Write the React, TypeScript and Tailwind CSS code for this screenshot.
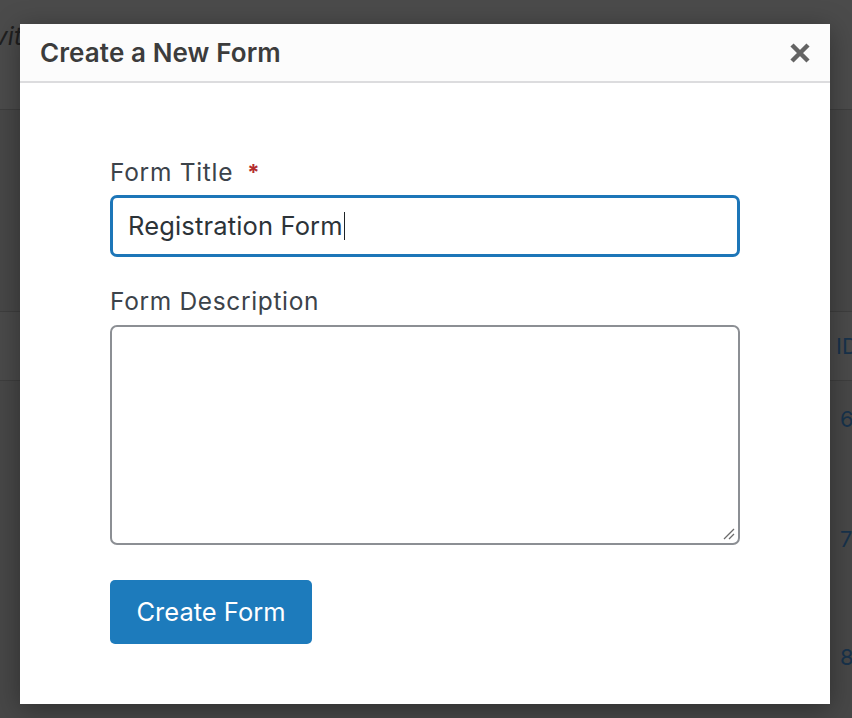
import React from 'react';

const font = { fontFamily: 'Inter, "Noto Sans", "Liberation Sans", sans-serif' };

const App: React.FC = () => {
    return (
        <div className="relative w-full h-[718px] overflow-hidden bg-[#474747]" style={font}>
            {/* page behind the overlay */}
            <div className="flex flex-col">
                <div className="h-[110px] bg-[#4b4b4b] border-b border-[#3e3e3e] overflow-hidden">
                    <div className="ml-[-52px] mt-[18px] text-[25px] italic text-[#1f1f1f] whitespace-nowrap">Activity</div>
                </div>
                <div className="h-[201px]" />
                <div className="h-[70px] bg-[#4a4a4a] border-y border-[#3e3e3e] flex items-center justify-end">
                    <span className="w-[16px] text-[22px] text-[#17324b] whitespace-nowrap overflow-hidden">ID</span>
                </div>
                <div className="flex flex-col items-end text-[22px] text-[#17324b]">
                    <div className="h-[120px] w-[12px] pt-[22px] overflow-hidden">6</div>
                    <div className="h-[118px] w-[12px] pt-[22px] overflow-hidden">7</div>
                    <div className="h-[120px] w-[12px] pt-[22px] overflow-hidden">8</div>
                </div>
            </div>

            {/* modal */}
            <div className="absolute left-[20px] top-[24px] w-[810px] h-[680px] bg-white shadow-[0_5px_25px_rgba(0,0,0,0.35)] flex flex-col">
                <div className="h-[59px] shrink-0 bg-[#fcfcfc] border-b-2 border-[#dcdcde] flex items-center justify-between pl-[20px] pr-[18px]">
                    <h1 className="text-[26px] font-semibold text-[#3c3c3c] tracking-[0.1px]">Create a New Form</h1>
                    <button className="w-[24px] h-[24px] flex items-center justify-center text-[#646464]">
                        <svg width="22" height="22" viewBox="0 0 22 22">
                            <path d="M3 3 L19 19 M19 3 L3 19" stroke="currentColor" strokeWidth="4.5" strokeLinecap="butt" />
                        </svg>
                    </button>
                </div>
                <div className="flex flex-col pl-[90px] pr-[90px] pt-[75px]">
                    <label className="flex items-center gap-[14px] text-[24.5px] tracking-[0.7px] text-[#3c434a] leading-[28px]">
                        Form Title <span className="text-[#b32d2e] text-[22px] font-bold">*</span>
                    </label>
                    <div className="mt-[9px] h-[62px] rounded-[7px] border-[3px] border-[#1d76b8] flex items-center pl-[15px] text-[25.5px] tracking-[0.15px] text-[#2c3338]">
                        Registration Form<span className="w-[1.5px] h-[28px] bg-[#1d2327] ml-[1px]" />
                    </div>
                    <label className="mt-[30px] text-[24.5px] tracking-[0.65px] text-[#3c434a] leading-[28px]">Form Description</label>
                    <div className="relative mt-[10px] h-[220px] rounded-[7px] border-2 border-[#8c8f94]">
                        <svg className="absolute right-[2px] bottom-[2px]" width="14" height="14" viewBox="0 0 14 14">
                            <path d="M2 12 L12 2 M7 12 L12 7" stroke="#6b6b6b" strokeWidth="1.3" />
                        </svg>
                    </div>
                    <div className="mt-[35px]">
                        <button className="h-[64px] w-[202px] rounded-[5px] bg-[#1d7bbc] text-white text-[25.5px]">Create Form</button>
                    </div>
                </div>
            </div>
        </div>
    );
};

export default App;
